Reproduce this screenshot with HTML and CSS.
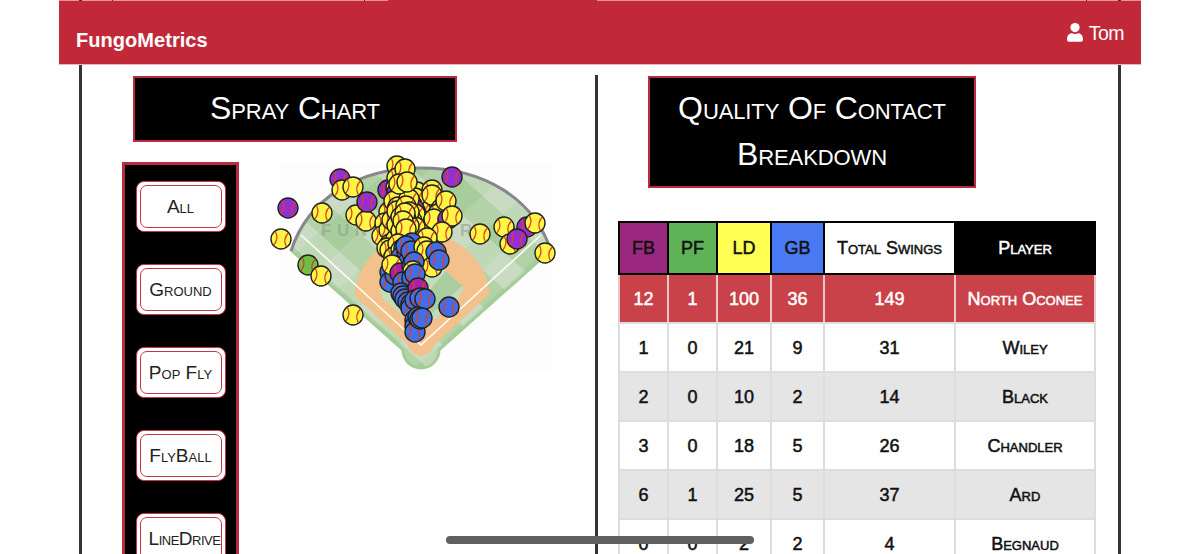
FILE: index.html
```
<!DOCTYPE html>
<html lang="en">
<head>
<meta charset="utf-8">
<title>FungoMetrics</title>
<link rel="stylesheet" href="styles.css">
</head>
<body>
<div class="app">
  <header class="navbar">
    <div class="brand">FungoMetrics</div>
    <div class="user">
      <svg class="user-icon" viewBox="0 0 16 19"><circle cx="8" cy="4.6" r="4.6"/><path d="M0 16.500C0 12.500 2.200 10.300 5 10.300Q8 11.500 11 10.300C13.800 10.300 16 12.500 16 16.500Q16 18.700 14 18.700H2Q0 18.700 0 16.500Z"/></svg>
      <span class="user-name">Tom</span>
    </div>
  </header>
  <main class="columns">
    <section class="spray">
      <h2 class="title">Spray Chart</h2>
      <div class="spray-body">
        <nav class="filters">
          <button class="filter"><span>All</span></button>
          <button class="filter"><span>Ground</span></button>
          <button class="filter"><span>Pop Fly</span></button>
          <button class="filter"><span>FlyBall</span></button>
          <button class="filter wide"><span>LineDrive</span></button>
        </nav>
        <svg class="field" viewBox="260 145 310 240">
          <defs>
            <pattern id="mow" width="58" height="58" patternUnits="userSpaceOnUse" patternTransform="translate(421 362) scale(1 .9) rotate(45)">
              <rect width="58" height="58" fill="#b4d2a7"/>
              <rect width="29" height="58" fill="#a0ca95" opacity=".6"/>
              <rect y="29" width="58" height="29" fill="#dce6d8" opacity=".45"/>
              <rect x="29" y="29" width="29" height="29" fill="#cbdcc7" opacity=".5"/>
            </pattern>
            <clipPath id="wedge"><path d="M421 357L280 227V150H562V227Z"/></clipPath>
            <g id="ball"><circle r="10" stroke="#22221a" stroke-width="1.400"/><path d="M-5.500-7.300C-3.200-3-4 2-7 5.800M7.300-6C3.500-2 3 3 5.300 7.600" fill="none" stroke="#dc3f24" stroke-width="1.300"/></g>
          </defs>
          <rect class="paper" x="280" y="163" width="271" height="208"/>
          <path d="M291 250C308 197 359 167 421 167S534 197 551 250L439 350A18 18 0 0 1 403 350Z" fill="url(#mow)"/>
          <path d="M291 250L403 350A18 18 0 0 0 439 350L551 250" fill="none" stroke="#a3cd98" stroke-width="3"/>
          <g clip-path="url(#wedge)"><circle cx="422" cy="301" r="68" fill="#f3c18c"/></g>
          <circle cx="421" cy="341" r="14" fill="#f3c18c"/>
          <path d="M421 249L464 288L458 299L421 331L383 299L379 288Z" fill="#c3dcbb"/>
          <path d="M446 271L462 286L430 315L418 304Z" fill="#a8ce9f"/>
          <path d="M301 235L421 345L541 235" fill="none" stroke="#fffdf4" stroke-width="1.600"/>
          <path d="M291 251C308 198 359 168 421 168S534 198 551 251" fill="none" stroke="#858788" stroke-width="3"/>
          <g class="watermark"><text x="321" y="236" letter-spacing="5.500">FUN</text><text x="460" y="236">R</text></g>
          <g id="hits"></g>
        </svg>
      </div>
    </section>
    <section class="contact">
      <h2 class="title">Quality Of Contact<br>Breakdown</h2>
      <table class="stats">
        <colgroup><col class="c1"><col class="c2"><col class="c3"><col class="c4"><col class="c5"><col class="c6"></colgroup>
        <thead><tr><th class="fb">FB</th><th class="pf">PF</th><th class="ld">LD</th><th class="gb">GB</th><th>Total Swings</th><th class="player">Player</th></tr></thead>
        <tbody>
          <tr class="team"><td>12</td><td>1</td><td>100</td><td>36</td><td>149</td><td>North Oconee</td></tr>
          <tr><td>1</td><td>0</td><td>21</td><td>9</td><td>31</td><td>Wiley</td></tr>
          <tr class="alt"><td>2</td><td>0</td><td>10</td><td>2</td><td>14</td><td>Black</td></tr>
          <tr><td>3</td><td>0</td><td>18</td><td>5</td><td>26</td><td>Chandler</td></tr>
          <tr class="alt"><td>6</td><td>1</td><td>25</td><td>5</td><td>37</td><td>Ard</td></tr>
          <tr><td>0</td><td>0</td><td>2</td><td>2</td><td>4</td><td>Begnaud</td></tr>
        </tbody>
      </table>
    </section>
  </main>
</div>
<div class="home-indicator"></div>
<script src="script.js"></script>
</body>
</html>
```
FILE: styles.css
```
* { box-sizing: border-box; }
html, body { margin: 0; height: 554px; overflow: hidden; }
body { background: #fff; font-family: "Liberation Sans", Arial, sans-serif; color: #111; position: relative; }
.app { width: 1082px; margin-left: 59px; }
.navbar {
  height: 65px; padding: 3px 17px 0; border-bottom: 1px solid #edb5ba;
  background: linear-gradient(90deg, #e9949b 20px, #5a2027 20px 23px, #e9949b 23px 53px, #5a2027 53px 54px, #e9949b 54px 305px, #5a2027 305px 306px, #e9949b 306px 329px, #c22938 329px 538px, #e9949b 538px 1027px, #5a2027 1027px 1028px, #e9949b 1028px 1059px, #5a2027 1059px 1062px, #e9949b 1062px) 0 0 / 100% 1px no-repeat #c22938;
  display: flex; justify-content: space-between; color: #fff;
}
.brand { font-size: 20px; font-weight: bold; line-height: 23px; margin-top: 26px; letter-spacing: .05px; }
.user { display: flex; gap: 6px; align-items: flex-start; margin-top: 20px; }
.user-icon { width: 16px; height: 19px; fill: #fff; }
.user-name { font-size: 19.5px; line-height: 22px; margin-top: -1px; letter-spacing: -.5px; }
.columns { display: flex; width: 1042px; height: 489px; margin-left: 20px; border-left: 3px solid #303535; border-right: 3px solid #303535; overflow: hidden; }
.spray { width: 513px; padding-top: 11px; flex: none; }
.contact { flex: none; width: 523px; margin-top: 10px; border-left: 3px solid #303535; }
.title {
  margin: 0; background: #000; color: #fff; border: 2px solid #bd2a40; text-align: center;
  font-size: 32px; line-height: 46px; font-weight: normal; font-variant: small-caps; white-space: nowrap; letter-spacing: -.12px;
}
.spray .title { width: 324px; height: 66px; margin-left: 51px; padding-top: 7px; }
.contact .title { width: 328px; height: 112px; margin: 1px 0 0 50px; padding-top: 7px; }
.spray-body { display: flex; align-items: flex-start; margin-top: 20px; }
.filters {
  width: 117px; height: 420px; margin-left: 40px; padding: 16px 0 0 10.5px; background: #000; border: 3px solid #b82b40; flex: none;
  display: flex; flex-direction: column; gap: 32px;
}
.filter {
  width: 90px; height: 51px; padding: 3px; border: 1px solid #c6364a; border-radius: 8px; background: #fff; flex: none;
  font: 19px "Liberation Sans", Arial, sans-serif; font-variant: small-caps; color: #222;
}
.filter span { display: block; width: 82px; height: 43px; line-height: 41px; border: 1px solid #c6364a; border-radius: 7px; white-space: nowrap; }
.wide span { padding-left: 8px; letter-spacing: -.5px; }
.field { width: 310px; height: 240px; margin: -17px 0 0 21px; flex: none; }
.paper { fill: #fdfdfd; }
.watermark { font: bold 17px "Liberation Sans", Arial, sans-serif; fill: #8d978b; opacity: .5; }
.stats { table-layout: fixed; width: 476px; margin: 33px 0 0 20px; border-collapse: collapse; font-size: 18px; }
.c1 { width: 49px; } .c2 { width: 49px; } .c3 { width: 54px; } .c4 { width: 53px; } .c5 { width: 131px; } .c6 { width: 140px; }
.stats th, .stats td { padding: 0; text-align: center; font-variant: small-caps; font-weight: normal; white-space: nowrap; -webkit-text-stroke: .5px currentColor; }
.stats th { height: 52px; border: 2px solid #000; }
.stats td { height: 49px; border: 2px solid #ddd; padding-top: 1px; }
.stats .team td { background: #c94149; color: #fff; border-color: #e9c6c8; border-top-color: #000; border-bottom-color: #ddd; }
.alt td { background: #e5e5e5; }
.fb { background: #9a287e; } .pf { background: #5eb356; } .ld { background: #ffff54; } .gb { background: #4a79f4; }
.player { background: #000; color: #fff; }
.home-indicator { position: absolute; left: 446px; top: 536px; width: 308px; height: 8px; border-radius: 4px; background: #606060; }
```
FILE: script.js
```
// Batted balls, bottom to top: colour key followed by x,y pairs.
const colours = { y: '#fdf646', b: '#416fe9', p: '#9430d3', g: '#70bd48', m: '#aa20aa' };
const hits = [
  ['p', 340,179, 288,208, 388,190, 452,177, 527,227],
  ['g', 308,265],
  ['y', 281,239, 322,213, 342,190, 353,187, 356,215, 366,221, 321,276, 353,315, 480,234, 504,227, 510,244, 535,223, 545,253],
  ['p', 367,202, 517,239],
  ['y', 397,166, 397,178, 396,188, 405,169],
  ['p', 397,192, 404,203],
  ['y', 389,212, 385,223, 394,201, 398,207, 382,236, 389,230, 392,220, 390,244, 396,239, 387,248, 397,211, 397,225, 401,217, 401,231],
  ['y', 417,192, 427,209, 430,222, 426,230, 432,212, 435,204, 437,218, 424,202, 427,211, 423,224],
  ['b', 407,230, 413,235, 404,240, 410,246],
  ['y', 421,200, 418,204, 421,211, 418,217, 421,224, 418,230, 415,198, 412,205, 415,211, 412,218],
  ['p', 414,209, 411,223],
  ['y', 415,214, 412,221, 415,227, 409,199, 406,206, 409,212, 406,219, 409,226, 405,213, 403,221, 406,229, 399,184, 407,182],
  ['y', 432,190, 432,195, 441,209, 438,214, 434,219, 446,201],
  ['p', 448,219],
  ['y', 452,216, 442,232, 427,238],
  ['y', 390,250, 398,244, 394,257, 401,250, 425,252, 421,259],
  ['b', 404,248, 401,257, 407,252, 412,243, 408,262, 413,256, 406,246, 411,251, 390,272],
  ['y', 424,247, 427,251, 432,267],
  ['b', 390,282, 395,275],
  ['y', 392,265],
  ['m', 400,273],
  ['b', 436,252, 439,260, 403,282, 412,266, 414,262],
  ['y', 413,271],
  ['b', 412,278, 415,274],
  ['b', 401,293, 403,296, 405,299, 408,302, 411,304],
  ['m', 418,288],
  ['b', 411,308, 415,300, 420,298, 425,299, 415,320, 415,326, 415,332, 418,317, 420,319, 422,318, 449,307]
];
const layer = document.getElementById('hits');
for (const [key, ...points] of hits) {
  for (let i = 0; i < points.length; i += 2) {
    const use = document.createElementNS('http://www.w3.org/2000/svg', 'use');
    use.setAttribute('href', '#ball');
    use.setAttribute('x', points[i]);
    use.setAttribute('y', points[i + 1]);
    use.setAttribute('fill', colours[key]);
    layer.appendChild(use);
  }
}
```
